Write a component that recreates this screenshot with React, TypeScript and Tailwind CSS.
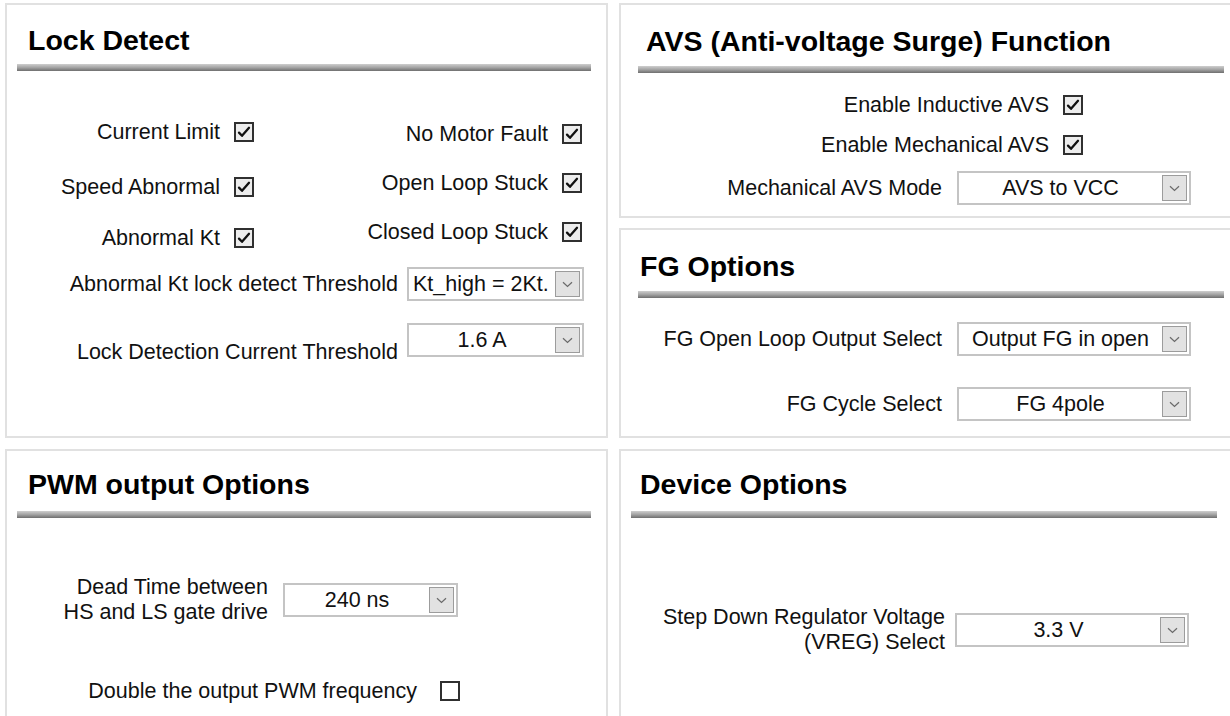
import React from 'react';

const labelText = "text-[21.5px] leading-[24px] text-[#111] whitespace-nowrap";

function CheckBox({ checked }: { checked: boolean }) {
  return (
    <span
      className={`flex h-[20px] w-[20px] shrink-0 items-center justify-center border-2 border-[#303030] ${
        checked ? 'bg-[#ededed]' : 'bg-white'
      }`}
    >
      {checked && (
        <svg width="14" height="14" viewBox="0 0 14 14" fill="none">
          <path d="M2 7.6l3 3.2L12 2.8" stroke="#111" strokeWidth="2.3" strokeLinecap="round" strokeLinejoin="round" />
        </svg>
      )}
    </span>
  );
}

function Select({ value, width, left }: { value: string; width: string; left?: boolean }) {
  return (
    <div className={`flex h-[34px] shrink-0 items-center border-2 border-[#c4c4c4] bg-white ${width}`}>
      <div
        className={`flex-1 overflow-hidden whitespace-nowrap text-[21.5px] leading-[24px] text-[#111] ${
          left ? 'pl-[4px] text-left' : 'text-center'
        }`}
      >
        {value}
      </div>
      <div className="mr-[2px] flex h-[26px] w-[25px] shrink-0 items-center justify-center border border-[#9c9c9c] bg-[#e2e2e2]">
        <svg width="11" height="7" viewBox="0 0 11 7" fill="none">
          <path d="M1 1.2l4.5 4.3L10 1.2" stroke="#6a6a6a" strokeWidth="1.2" />
        </svg>
      </div>
    </div>
  );
}

function Heading({ title, className, barClass }: { title: string; className: string; barClass: string }) {
  return (
    <>
      <h2 className={`text-[28.5px] font-bold leading-[32px] text-black ${className}`}>{title}</h2>
      <div className={`h-[7px] bg-gradient-to-b from-[#cfcfcf] via-[#a4a4a4] to-[#6f6f6f] ${barClass}`} />
    </>
  );
}

function CheckRow({ label, checked, className }: { label: string; checked: boolean; className?: string }) {
  return (
    <div className={`flex h-[24px] items-center gap-[14px] ${className ?? ''}`}>
      <span className={labelText}>{label}</span>
      <CheckBox checked={checked} />
    </div>
  );
}

function LockDetect() {
  return (
    <section className="h-[435px] border-2 border-[#e1e1e1] bg-white">
      <Heading title="Lock Detect" className="pl-[21px] pt-[19px]" barClass="ml-[10px] mr-[15px] mt-[8px]" />
      <div className="flex">
        <div className="flex w-[247px] flex-col items-end">
          <CheckRow label="Current Limit" checked className="mt-[49px]" />
          <CheckRow label="Speed Abnormal" checked className="mt-[31px]" />
          <CheckRow label="Abnormal Kt" checked className="mt-[27px]" />
        </div>
        <div className="flex w-[328px] flex-col items-end">
          <CheckRow label="No Motor Fault" checked className="mt-[51px]" />
          <CheckRow label="Open Loop Stuck" checked className="mt-[25px]" />
          <CheckRow label="Closed Loop Stuck" checked className="mt-[25px]" />
        </div>
      </div>
      <div className="mt-[17px] flex items-center justify-end gap-[9px] pr-[22px]">
        <span className={labelText}>Abnormal Kt lock detect Threshold</span>
        <Select value="Kt_high = 2Kt." width="w-[177px]" left />
      </div>
      <div className="mt-[22px] flex items-start justify-end gap-[9px] pr-[22px]">
        <span className={`${labelText} mt-[17px]`}>Lock Detection Current Threshold</span>
        <Select value="1.6 A" width="w-[177px]" />
      </div>
    </section>
  );
}

function PwmOptions() {
  return (
    <section className="mt-[11px] h-[300px] border-2 border-[#e1e1e1] bg-white">
      <Heading title="PWM output Options" className="pl-[21px] pt-[17px]" barClass="ml-[10px] mr-[15px] mt-[11px]" />
      <div className="mt-[57px] flex items-center gap-[15px]">
        <div className={`w-[261px] text-right ${labelText} leading-[25px]`}>
          Dead Time between
          <br />
          HS and LS gate drive
        </div>
        <Select value="240 ns" width="w-[175px]" />
      </div>
      <div className="mt-[54px] flex w-[453px] justify-end">
        <div className="flex h-[24px] items-center gap-[23px]">
          <span className={labelText}>Double the output PWM frequency</span>
          <CheckBox checked={false} />
        </div>
      </div>
    </section>
  );
}

function AvsFunction() {
  return (
    <section className="h-[215px] border-2 border-[#e1e1e1] bg-white">
      <Heading title="AVS (Anti-voltage Surge) Function" className="pl-[25px] pt-[20px]" barClass="ml-[17px] mr-[8px] mt-[9px]" />
      <div className="flex w-[462px] flex-col items-end">
        <CheckRow label="Enable Inductive AVS" checked className="mt-[20px]" />
        <CheckRow label="Enable Mechanical AVS" checked className="mt-[16px]" />
      </div>
      <div className="mt-[14px] flex items-center gap-[15px]">
        <span className={`w-[321px] text-right ${labelText}`}>Mechanical AVS Mode</span>
        <Select value="AVS to VCC" width="w-[234px]" />
      </div>
    </section>
  );
}

function FgOptions() {
  return (
    <section className="mt-[10px] h-[210px] border-2 border-[#e1e1e1] bg-white">
      <Heading title="FG Options" className="pl-[19px] pt-[20px]" barClass="ml-[17px] mr-[8px] mt-[9px]" />
      <div className="mt-[24px] flex items-center gap-[15px]">
        <span className={`w-[321px] text-right ${labelText}`}>FG Open Loop Output Select</span>
        <Select value="Output FG in open" width="w-[234px]" />
      </div>
      <div className="mt-[31px] flex items-center gap-[15px]">
        <span className={`w-[321px] text-right ${labelText}`}>FG Cycle Select</span>
        <Select value="FG 4pole" width="w-[234px]" />
      </div>
    </section>
  );
}

function DeviceOptions() {
  return (
    <section className="mt-[11px] h-[300px] border-2 border-[#e1e1e1] bg-white">
      <Heading title="Device Options" className="pl-[19px] pt-[17px]" barClass="ml-[10px] mr-[15px] mt-[11px]" />
      <div className="mt-[87px] flex items-center gap-[10px]">
        <div className={`w-[324px] text-right ${labelText} leading-[25px]`}>
          Step Down Regulator Voltage
          <br />
          (VREG) Select
        </div>
        <Select value="3.3 V" width="w-[234px]" />
      </div>
    </section>
  );
}

export default function App() {
  return (
    <div className="h-[716px] w-[1230px] overflow-hidden bg-white font-['Liberation_Sans',Arial,sans-serif]">
      <div className="flex w-[1240px] gap-[11px] pl-[5px] pt-[3px]">
        <div className="flex w-[603px] shrink-0 flex-col">
          <LockDetect />
          <PwmOptions />
        </div>
        <div className="flex w-[615px] shrink-0 flex-col">
          <AvsFunction />
          <FgOptions />
          <DeviceOptions />
        </div>
      </div>
    </div>
  );
}
